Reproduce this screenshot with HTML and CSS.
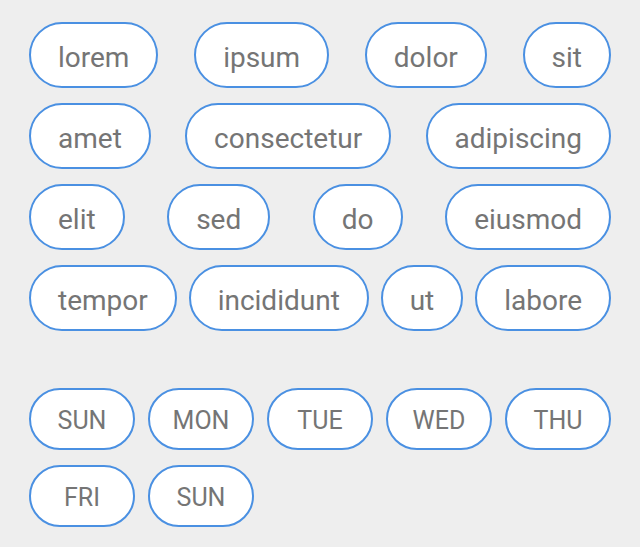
FILE: index.html
```html
<!DOCTYPE html>
<html>
<head>
<meta charset="utf-8">
<link rel="stylesheet" href="styles.css">
</head>
<body>
<div class="page">
  <div class="tags">
    <span class="chip">lorem</span>
    <span class="chip">ipsum</span>
    <span class="chip">dolor</span>
    <span class="chip">sit</span>
    <span class="chip">amet</span>
    <span class="chip">consectetur</span>
    <span class="chip">adipiscing</span>
    <span class="chip">elit</span>
    <span class="chip">sed</span>
    <span class="chip">do</span>
    <span class="chip">eiusmod</span>
    <span class="chip">tempor</span>
    <span class="chip">incididunt</span>
    <span class="chip">ut</span>
    <span class="chip">labore</span>
  </div>
  <div class="days">
    <span class="day">SUN</span>
    <span class="day">MON</span>
    <span class="day">TUE</span>
    <span class="day">WED</span>
    <span class="day">THU</span>
    <span class="day">FRI</span>
    <span class="day">SUN</span>
  </div>
</div>
</body>
</html>
```

FILE: styles.css
```css
html, body {
  margin: 0;
  padding: 0;
  background: #eeeeee;
}
body {
  width: 640px;
  height: 547px;
  overflow: hidden;
  font-family: Roboto, "Noto Sans", sans-serif;
  color: #757575;
}
.page {
  padding: 22px 29px 0 29px;
  display: flex;
  flex-direction: column;
  gap: 57px;
}
.tags {
  display: flex;
  flex-wrap: wrap;
  justify-content: space-between;
  row-gap: 15px;
}
.chip {
  box-sizing: border-box;
  height: 66px;
  padding: 4px 27px 0 27px;
  border: 2px solid #4a90e2;
  border-radius: 33px;
  background: #ffffff;
  font-size: 28px;
  display: flex;
  align-items: center;
  justify-content: center;
  white-space: nowrap;
}
.days {
  display: grid;
  grid-template-columns: repeat(5, 1fr);
  column-gap: 13px;
  row-gap: 15px;
}
.day {
  box-sizing: border-box;
  height: 62px;
  padding-top: 2px;
  border: 2px solid #4a90e2;
  border-radius: 31px;
  background: #ffffff;
  font-size: 25px;
  display: flex;
  align-items: center;
  justify-content: center;
}
```
